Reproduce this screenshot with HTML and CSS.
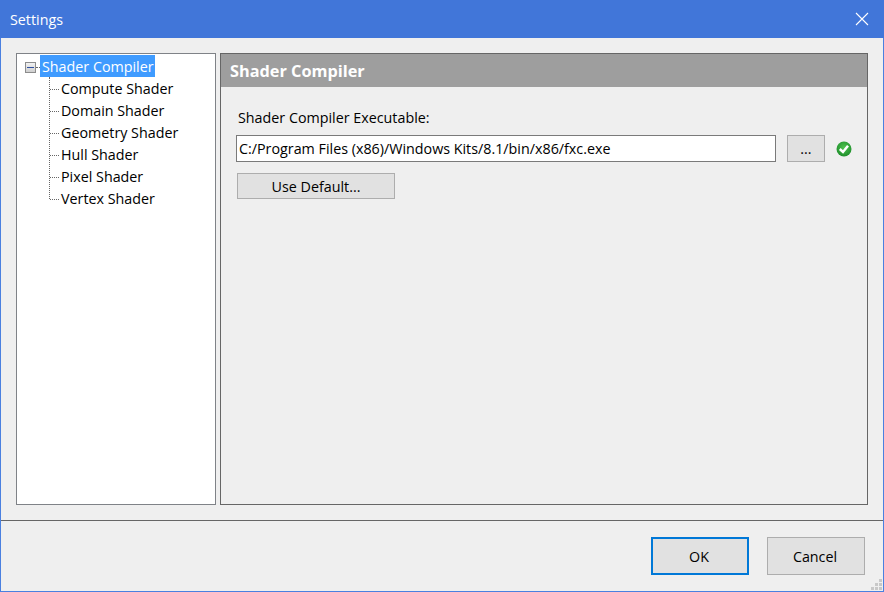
FILE: index.html
```html
<!DOCTYPE html>
<html lang="en">
<head>
<meta charset="utf-8">
<title>Settings</title>
<link rel="stylesheet" href="styles.css">
</head>
<body>
<div class="window">
  <header class="titlebar">
    <span class="title">Settings</span>
    <svg class="close" width="14" height="14" viewBox="0 0 14 14"><path d="M1 1 13 13M13 1 1 13" stroke="#fff" stroke-width="1.1" fill="none"/></svg>
  </header>
  <main class="content">
    <nav class="tree">
      <div class="root-row">
        <span class="expander"><span class="minus"></span></span>
        <span class="root-dots"></span>
        <span class="selected">Shader Compiler</span>
      </div>
      <ul class="children">
        <li>Compute Shader</li>
        <li>Domain Shader</li>
        <li>Geometry Shader</li>
        <li>Hull Shader</li>
        <li>Pixel Shader</li>
        <li>Vertex Shader</li>
      </ul>
    </nav>
    <section class="panel">
      <h1 class="panel-title">Shader Compiler</h1>
      <div class="panel-body">
        <label class="field-label" for="exe">Shader Compiler Executable:</label>
        <div class="path-row">
          <input id="exe" class="path" type="text" value="C:/Program Files (x86)/Windows Kits/8.1/bin/x86/fxc.exe">
          <button class="btn browse" type="button">...</button>
          <svg class="ok-icon" width="16" height="16" viewBox="0 0 16 16">
            <defs><radialGradient id="g" cx="50%" cy="40%" r="60%"><stop offset="0" stop-color="#4fc24f"/><stop offset="1" stop-color="#1f8f2c"/></radialGradient></defs>
            <circle cx="8" cy="8" r="7.5" fill="url(#g)"/>
            <path d="M3.8 8 7 11 12 4.8" stroke="#fff" stroke-width="2.5" fill="none"/>
          </svg>
        </div>
        <button class="btn default" type="button">Use Default...</button>
      </div>
    </section>
  </main>
  <footer class="footer">
    <button class="btn action primary" type="button">OK</button>
    <button class="btn action" type="button">Cancel</button>
    <svg class="grip" width="12" height="12" viewBox="0 0 12 12" fill="#c8c8c8"><rect x="8" y="0" width="3" height="3"/><rect x="4" y="4" width="3" height="3"/><rect x="8" y="4" width="3" height="3"/><rect x="0" y="8" width="3" height="3"/><rect x="4" y="8" width="3" height="3"/><rect x="8" y="8" width="3" height="3"/></svg>
  </footer>
</div>
</body>
</html>
```
FILE: styles.css
```css
* { box-sizing: border-box; }
html, body { margin: 0; height: 100%; }
body {
  font-family: "Open Sans", "Noto Sans", sans-serif;
  font-size: 14.3px;
  color: #000;
}
.window {
  width: 884px;
  height: 592px;
  display: flex;
  flex-direction: column;
  background: #efefef;
  border: 1px solid #4a80e0;
  border-top: 0;
}
.titlebar {
  height: 38px;
  flex: none;
  margin: 0 -1px;
  padding: 0 15px 0 10px;
  background: #4176d9;
  color: #fff;
  display: flex;
  align-items: center;
  justify-content: space-between;
}
.content {
  flex: 1;
  display: flex;
  gap: 4px;
  padding: 15px 15px 15px;
  min-height: 0;
}
.tree {
  width: 200px;
  background: #fff;
  border: 1px solid #7f8287;
  padding: 1px 0 0 0;
}
.root-row {
  height: 22px;
  display: flex;
  align-items: center;
  padding-left: 8px;
}
.expander {
  width: 11px;
  height: 11px;
  flex: none;
  margin-top: 2px;
  border: 1px solid #8c8c8c;
  background: linear-gradient(#f2f2f2, #cfcfcf);
  display: flex;
  align-items: center;
  justify-content: center;
}
.minus { width: 7px; height: 1px; background: #2f4f9f; }
.root-dots { width: 4px; margin-top: 2px; border-top: 1px dotted #666; }
.selected {
  background: #3f9bff;
  color: #fff;
  height: 22px;
  line-height: 24px;
  padding: 0 1px 0 2px;
}
.children {
  list-style: none;
  margin: 0 0 0 32px;
  padding: 0;
  border-left: 1px dotted #666;
  height: 122px;
}
.children li {
  height: 22px;
  line-height: 24px;
  padding-left: 11px;
  position: relative;
}
.children li::before {
  content: "";
  position: absolute;
  left: 0;
  top: 12px;
  width: 9px;
  border-top: 1px dotted #666;
}
.panel {
  flex: 1;
  border: 1px solid #666;
  display: flex;
  flex-direction: column;
}
.panel-title {
  margin: 0;
  height: 33px;
  line-height: 35px;
  padding-left: 9px;
  background: #9e9e9e;
  color: #fff;
  font-size: 16.3px;
  font-weight: 700;
}
.panel-body { padding: 21px 15px 0; }
.field-label { display: block; height: 22px; line-height: 20px; padding-left: 2px; margin-bottom: 5px; }
.path-row { display: flex; align-items: center; height: 27px; }
.path {
  width: 540px;
  height: 27px;
  border: 1px solid #7a7a7a;
  background: #fff;
  font: inherit;
  padding: 0 2px;
  color: #000;
  outline: none;
}
.btn {
  font: inherit;
  color: #000;
  background: #e1e1e1;
  border: 1px solid #adadad;
  padding: 0;
}
.browse { width: 38px; height: 27px; margin-left: 11px; }
.ok-icon { margin-left: 11px; }
.default { display: block; width: 158px; height: 26px; margin: 11px 0 0 1px; }
.footer {
  height: 71px;
  flex: none;
  border-top: 1px solid #666;
  display: flex;
  align-items: center;
  justify-content: flex-end;
  gap: 18px;
  padding: 0 18px 0 0;
  position: relative;
}
.action { width: 98px; height: 38px; padding-right: 2px; }
.primary { border: 2px solid #0078d7; }
.grip { position: absolute; right: 0; bottom: 0; }
```
